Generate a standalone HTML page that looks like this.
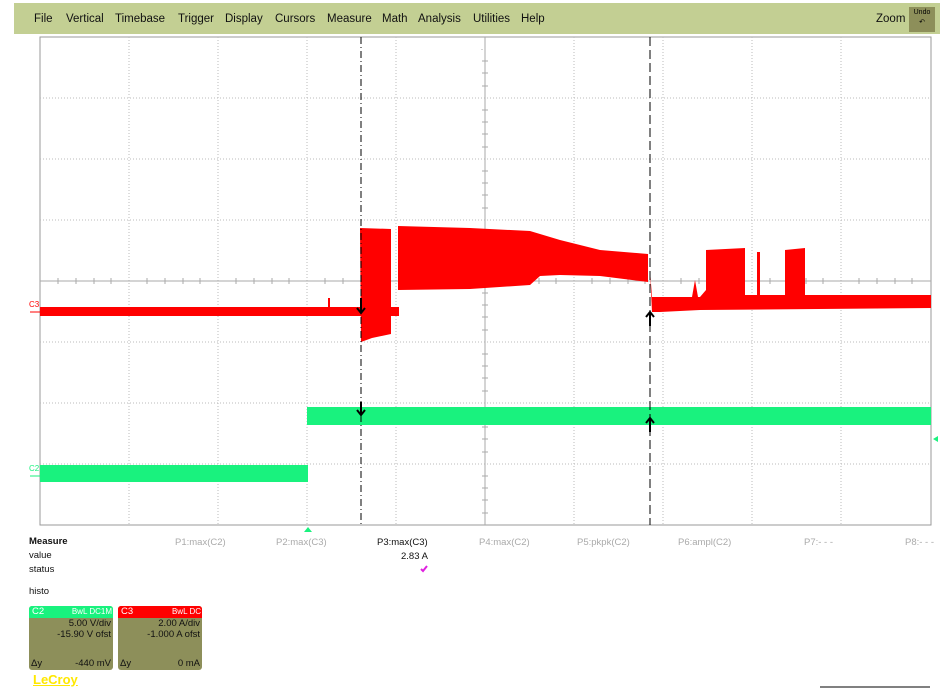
<!DOCTYPE html>
<html><head><style>
body{margin:0;width:949px;height:688px;background:#fff;font-family:"Liberation Sans",sans-serif;overflow:hidden;position:relative}
.menu{position:absolute;left:14px;top:3px;width:926px;height:31px;background:#c3cf93}
.menu span{position:absolute;top:10px;font-size:11.5px;color:#111}
.t{position:absolute;font-size:9.5px;color:#111}
.g{color:#aaa}
.box{position:absolute;top:606px;width:84px;height:64px;background:#8d8f5a;border-radius:3px;font-size:9.5px;color:#111}
</style></head><body>
<div class="menu">
<span style="left:20px">File</span><span style="left:52px">Vertical</span><span style="left:101px">Timebase</span><span style="left:164px">Trigger</span><span style="left:211px">Display</span><span style="left:261px">Cursors</span><span style="left:313px">Measure</span><span style="left:368px">Math</span><span style="left:404px">Analysis</span><span style="left:459px">Utilities</span><span style="left:507px">Help</span><span style="left:862px">Zoom</span>
<div style="position:absolute;left:895px;top:4px;width:26px;height:24px;background:#8d8f5a;font-size:7px;text-align:center;line-height:10px;padding-top:1px">Undo<br>↶</div>
</div>
<svg width="949" height="688" style="position:absolute;left:0;top:0">
<rect x="40" y="37" width="891" height="488" fill="none" stroke="#999" stroke-width="1"/>
<g stroke="#bbb" stroke-dasharray="1,2">
<line x1="129" y1="37" x2="129" y2="525"/><line x1="218" y1="37" x2="218" y2="525"/><line x1="307" y1="37" x2="307" y2="525"/><line x1="396" y1="37" x2="396" y2="525"/><line x1="574" y1="37" x2="574" y2="525"/><line x1="663" y1="37" x2="663" y2="525"/><line x1="752" y1="37" x2="752" y2="525"/><line x1="841" y1="37" x2="841" y2="525"/>
<line x1="40" y1="98" x2="931" y2="98"/><line x1="40" y1="159" x2="931" y2="159"/><line x1="40" y1="220" x2="931" y2="220"/><line x1="40" y1="342" x2="931" y2="342"/><line x1="40" y1="403" x2="931" y2="403"/><line x1="40" y1="464" x2="931" y2="464"/>
</g>
<line x1="485" y1="37" x2="485" y2="525" stroke="#aaa"/>
<line x1="40" y1="281" x2="931" y2="281" stroke="#aaa"/>
<g stroke="#aaa" stroke-dasharray="1,16.8" stroke-dashoffset="0">
<line x1="57.8" y1="278" x2="931" y2="278" stroke-width="0"/>
</g>
<path d="M58 278v6M76 278v6M94 278v6M111 278v6M147 278v6M165 278v6M183 278v6M200 278v6M236 278v6M254 278v6M272 278v6M289 278v6M325 278v6M343 278v6M414 278v6M432 278v6M450 278v6M467 278v6M503 278v6M521 278v6M539 278v6M556 278v6M592 278v6M610 278v6M628 278v6M645 278v6M681 278v6M699 278v6M717 278v6M734 278v6M770 278v6M788 278v6M806 278v6M823 278v6M859 278v6M877 278v6M895 278v6M912 278v6M482 49v1M482 61h6M482 73h6M482 86h6M482 110h6M482 122h6M482 134h6M482 147h6M482 171h6M482 183h6M482 195h6M482 208h6M482 232h6M482 244h6M482 256h6M482 269h6M482 293h6M482 305h6M482 317h6M482 330h6M482 354h6M482 366h6M482 378h6M482 391h6M482 415h6M482 427h6M482 439h6M482 452h6M482 476h6M482 488h6M482 500h6M482 513h6" stroke="#aaa"/>
<!-- red -->
<g fill="#f00">
<rect x="40" y="307" width="321" height="9"/>
<rect x="328" y="298" width="2" height="10"/>
<polygon points="360,228 391,229 391,334 372,338 361,342"/>
<rect x="391" y="307" width="8" height="9"/>
<polygon points="398,226 470,228 530,231 560,240 600,250 648,254 648,282 600,276 560,275 540,276 530,285 470,289 398,290"/>
<polygon points="650,270 652,297 700,297 706,290 706,250 745,248 745,295 757,295 757,252 760,252 760,295 785,295 785,250 805,248 805,295 931,295 931,308 700,310 660,312 652,312"/>
<polygon points="692,297 695,280 698,297"/>
</g>
<!-- green -->
<g fill="#19f27e">
<rect x="40" y="465" width="268" height="17"/>
<rect x="307" y="407" width="624" height="18"/>
</g>
<line x1="361" y1="37" x2="361" y2="525" stroke="#000" stroke-dasharray="7,3,1,3"/>
<line x1="650" y1="37" x2="650" y2="525" stroke="#000" stroke-dasharray="9,4"/>
<g fill="none" stroke="#000" stroke-width="2">
<path d="M361 298v14M357 308l4 5 4-5"/><path d="M361 402v13M357 410l4 5 4-5"/>
<path d="M650 312v14M646 317l4-5 4 5"/><path d="M650 418v14M646 423l4-5 4 5"/>
</g>
<text x="29" y="307" font-size="8" fill="#f00" font-family="Liberation Sans">C3</text>
<line x1="30" y1="312" x2="40" y2="312" stroke="#f00"/>
<text x="29" y="471" font-size="8" fill="#19f27e" font-family="Liberation Sans">C2</text>
<line x1="30" y1="476" x2="40" y2="476" stroke="#19f27e"/>
<polygon points="304,532 308,527 312,532" fill="#19f27e"/>
<polygon points="933,439 938,436 938,442" fill="#19f27e"/>
<path d="M421 569l2 2 4-5" stroke="#e020e0" stroke-width="2" fill="none"/>
<line x1="820" y1="687" x2="930" y2="687" stroke="#000"/>
</svg>
<div class="t" style="left:29px;top:536px;font-weight:bold">Measure</div>
<div class="t" style="left:29px;top:550px">value</div>
<div class="t" style="left:29px;top:564px">status</div>
<div class="t" style="left:29px;top:586px">histo</div>
<div class="t g" style="left:175px;top:537px">P1:max(C2)</div>
<div class="t g" style="left:276px;top:537px">P2:max(C3)</div>
<div class="t" style="left:377px;top:537px">P3:max(C3)</div>
<div class="t g" style="left:479px;top:537px">P4:max(C2)</div>
<div class="t g" style="left:577px;top:537px">P5:pkpk(C2)</div>
<div class="t g" style="left:678px;top:537px">P6:ampl(C2)</div>
<div class="t g" style="left:804px;top:537px">P7:- - -</div>
<div class="t g" style="left:905px;top:537px">P8:- - -</div>
<div class="t" style="left:401px;top:551px">2.83 A</div>
<div class="box" style="left:29px">
<div style="background:#19f27e;height:12px;border-radius:3px 3px 0 0;color:#fff;padding-left:3px;line-height:12px">C2<span style="float:right;font-size:8px;margin-right:1px">BwL DC1M</span></div>
<div style="text-align:right;padding-right:2px;line-height:11px">5.00 V/div<br>-15.90 V ofst</div>
<div style="position:absolute;left:2px;right:2px;top:52px">Δy<span style="float:right">-440 mV</span></div></div>
<div class="box" style="left:118px">
<div style="background:#f00;height:12px;border-radius:3px 3px 0 0;color:#fff;padding-left:3px;line-height:12px">C3<span style="float:right;font-size:8px;margin-right:1px">BwL DC</span></div>
<div style="text-align:right;padding-right:2px;line-height:11px">2.00 A/div<br>-1.000 A ofst</div>
<div style="position:absolute;left:2px;right:2px;top:52px">Δy<span style="float:right">0 mA</span></div></div>
<div style="position:absolute;left:33px;top:672px;font-size:13px;color:#ffe800;font-weight:bold;text-decoration:underline">LeCroy</div>
</body></html>
